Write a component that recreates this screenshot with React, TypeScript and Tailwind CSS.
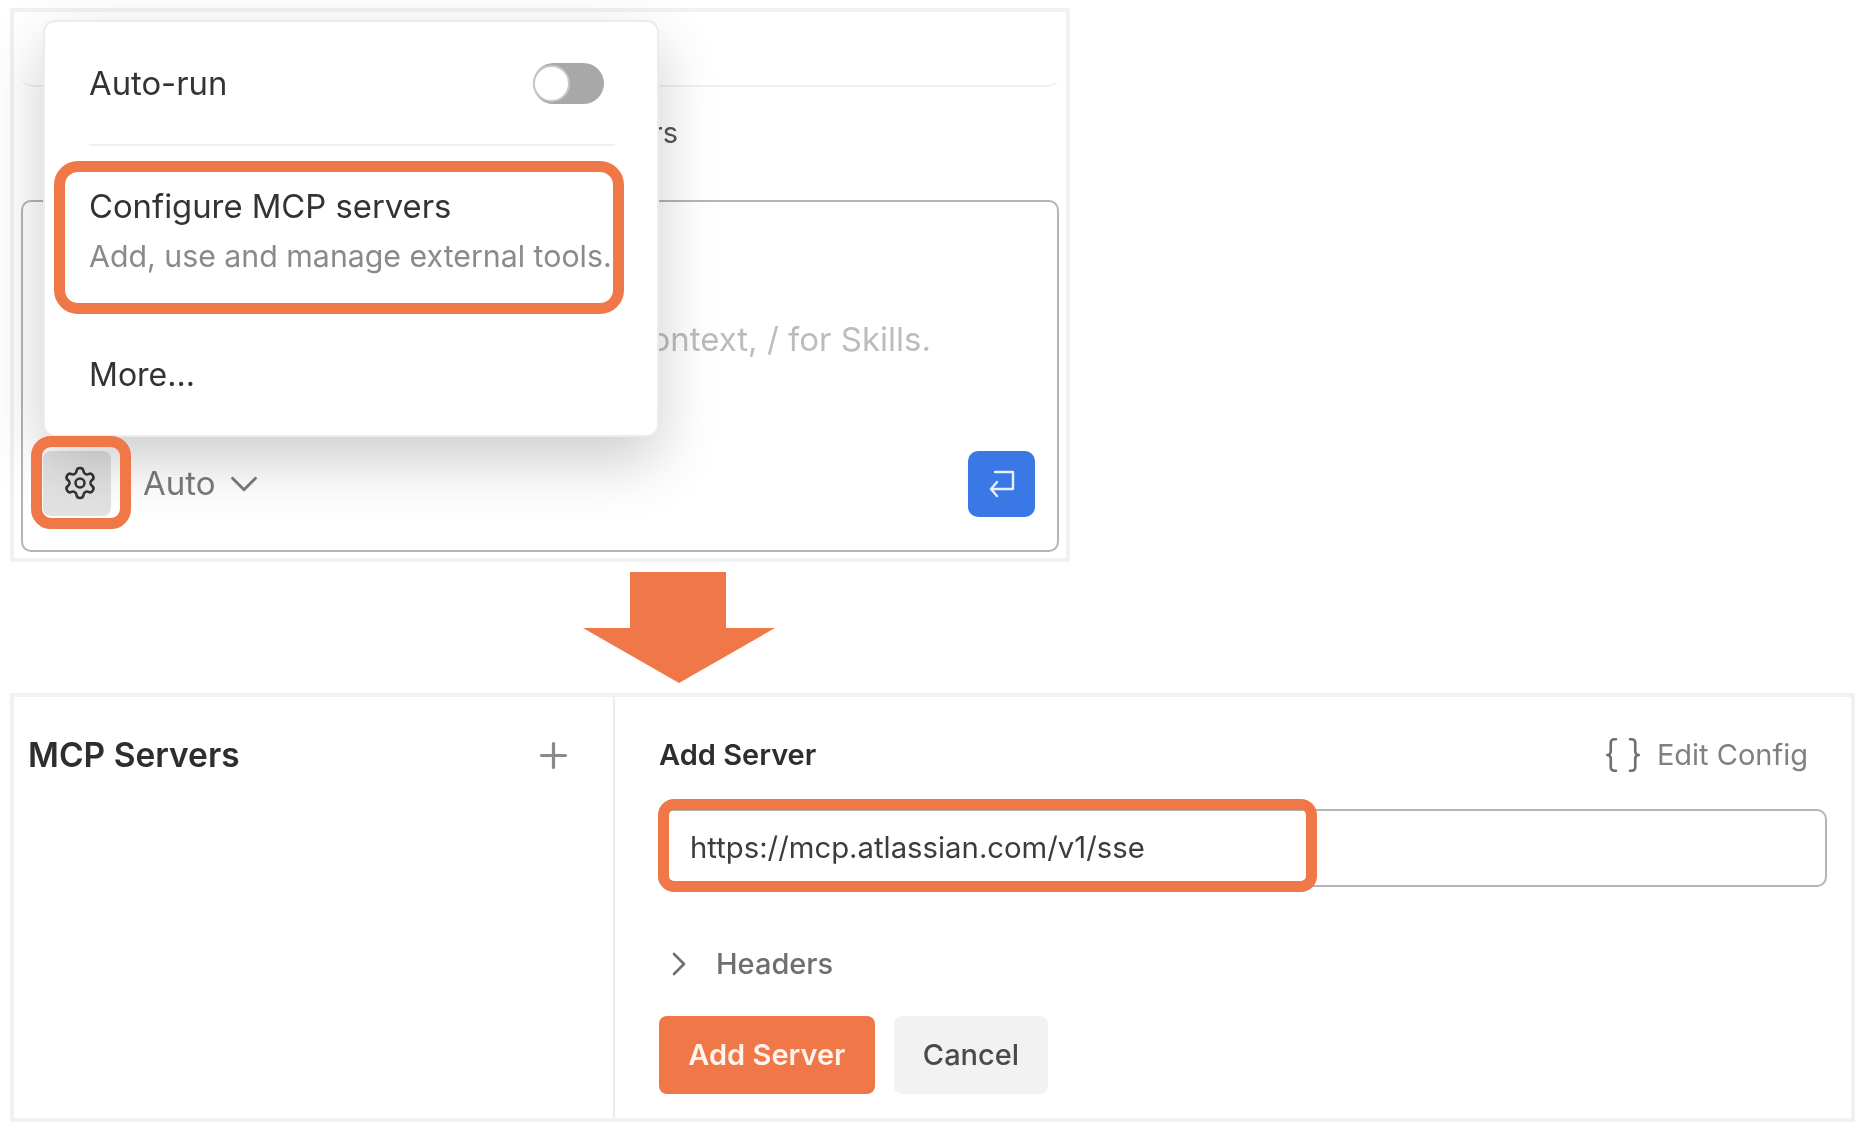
import { Braces, ChevronDown, ChevronRight, Plus, Settings } from "lucide-react";

const orange = "border-[#f07747]";

function EnterIcon() {
  return (
    <svg width="28" height="30" viewBox="0 0 28 30" fill="none" stroke="#e8f0fd" strokeWidth="2.4" strokeLinecap="round" strokeLinejoin="round">
      <path d="M7 3h18v17H3" />
      <path d="M9 13l-6 7 6 7" />
    </svg>
  );
}

function Menu() {
  return (
    <div className="absolute left-[29px] top-[8px] w-[616px] h-[417px] bg-white rounded-xl border-2 border-[#ececec] shadow-[0_24px_60px_rgba(0,0,0,0.2)] px-[44px] flex flex-col">
      <div className="h-[124px] shrink-0 pt-[2px] border-b-2 border-[#f0f0f0] flex items-center justify-between mr-[-2px]">
        <span className="text-[32.8px] text-[#333333]">Auto-run</span>
        <div className="w-[71px] h-[41px] mb-[2px] rounded-full bg-[#a8a8a8] mr-[11px] flex items-center">
          <div className="w-[37px] h-[37px] rounded-full bg-white border-2 border-[#c8c8c8]"></div>
        </div>
      </div>
      <div className="pt-[40px] flex flex-col">
        <span className="text-[32.8px] leading-[40px] text-[#333333] whitespace-nowrap">Configure MCP servers</span>
        <span className="text-[30.3px] leading-[40px] mt-[10px] text-[#8a8a8a] whitespace-nowrap">Add, use and manage external tools.</span>
      </div>
      <span className="text-[32px] leading-[40px] mt-[79px] text-[#333333]">More...</span>
    </div>
  );
}

function TopPanel() {
  return (
    <div className="relative ml-[10px] w-[1060px] h-[554px] border-[4px] border-[#f1f1f1] px-[7px] flex flex-col">
      <div className="h-[75px] shrink-0 border-b-2 border-[#f1f1f1] rounded-b-xl"></div>
      <div className="h-[113px] shrink-0 pb-[22px] flex items-center">
        <span className="w-[657px] text-right text-[29px] text-[#555555]">MCP servers</span>
      </div>
      <div className="h-[352px] shrink-0 border-2 border-[#b4b4b4] rounded-[10px] pl-[20px] pr-[22px] flex flex-col">
        <div className="h-[248px] shrink-0 pt-[117px]">
          <div className="w-[888px] text-right text-[33px] leading-[40px] text-[#bcbcbc] whitespace-nowrap">Plan, @ for context, / for Skills.</div>
        </div>
        <div className="mt-[1px] flex items-start justify-between">
          <div className="flex items-center">
            <div className="w-[68px] h-[65px] rounded-lg bg-[#e2e2e2] pl-[6px] pb-[2px] flex items-center justify-center">
              <Settings size={36} strokeWidth={1.7} color="#333333" />
            </div>
            <span className="ml-[32px] text-[33px] text-[#7a7a7a]">Auto</span>
            <ChevronDown size={46} strokeWidth={1.5} color="#7a7a7a" className="ml-[5px]" />
          </div>
          <div className="w-[67px] h-[66px] rounded-[10px] bg-[#3a78e6] flex items-center justify-center">
            <EnterIcon />
          </div>
        </div>
      </div>
      <Menu />
      <div className={`absolute left-[40px] top-[149px] w-[570px] h-[153px] rounded-[24px] border-[11px] ${orange}`}></div>
      <div className={`absolute left-[17px] top-[424px] w-[100px] h-[93px] rounded-[20px] border-[11px] ${orange}`}></div>
    </div>
  );
}

function Arrow() {
  return (
    <div className="ml-[583px] mt-[10px] w-[192px] h-[111px]">
      <svg width="192" height="111" viewBox="0 0 192 111">
        <path d="M47 0h96v56h49l-96 55L0 56h47z" fill="#f07747" />
      </svg>
    </div>
  );
}

function BottomPanel() {
  return (
    <div className="relative mt-[10px] ml-[10px] w-[1845px] h-[429px] border-[4px] border-[#f1f1f1] flex">
      <div className="w-[601px] shrink-0 border-r-2 border-[#ededed] pl-[14px] pr-[39px] pt-[34px]">
        <div className="flex items-center justify-between h-[48px]">
          <span className="text-[33.5px] font-semibold text-[#2e2e2e]">MCP Servers</span>
          <Plus size={41} strokeWidth={1.9} color="#8a8a8a" />
        </div>
      </div>
      <div className="flex-1 pl-[43px] pr-[24px] pt-[34px]">
        <div className="flex items-center justify-between h-[48px]">
          <span className="ml-[1px] text-[29px] font-semibold text-[#2e2e2e]">Add Server</span>
          <div className="flex items-center pr-[19px]">
            <Braces size={42} strokeWidth={1.5} color="#6f6f6f" />
            <span className="ml-[13px] text-[29px] text-[#808080]">Edit Config</span>
          </div>
        </div>
        <div className="mt-[30px] h-[78px] border-2 border-[#b4b4b4] rounded-[10px] pl-[30px] flex items-center">
          <span className="text-[29.3px] text-[#3c3c3c]">https://mcp.atlassian.com/v1/sse</span>
        </div>
        <div className="mt-[53px] h-[48px] flex items-center pl-[1px]">
          <ChevronRight size={40} strokeWidth={1.6} color="#707070" />
          <span className="ml-[17px] text-[29px] font-medium text-[#6f6f6f]">Headers</span>
        </div>
        <div className="mt-[28px] ml-[1px] flex gap-[19px]">
          <div className="w-[216px] h-[78px] rounded-lg bg-[#f07747] flex items-center justify-center">
            <span className="text-[29px] font-semibold text-[#fff3ee]">Add Server</span>
          </div>
          <div className="w-[154px] h-[78px] rounded-lg bg-[#f2f2f2] flex items-center justify-center">
            <span className="text-[29px] font-medium text-[#4a4a4a]">Cancel</span>
          </div>
        </div>
      </div>
      <div className={`absolute left-[644px] top-[102px] w-[659px] h-[93px] rounded-[16px] border-[11px] ${orange}`}></div>
    </div>
  );
}

export default function App() {
  return (
    <div className="relative w-[1868px] h-[1128px] overflow-hidden bg-white pt-[8px] blur-[0.6px] font-['Inter','Liberation_Sans',sans-serif]">
      <TopPanel />
      <Arrow />
      <BottomPanel />
    </div>
  );
}
